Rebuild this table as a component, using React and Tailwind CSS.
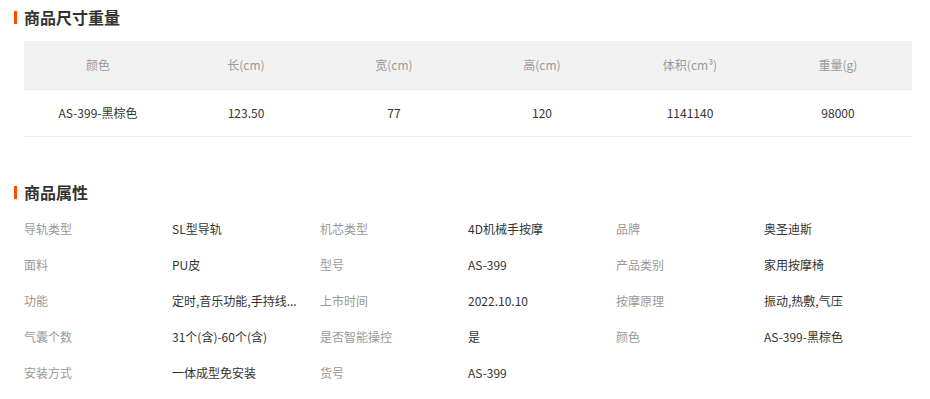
const sizeHeads = ["颜色", "长(cm)", "宽(cm)", "高(cm)", "体积(cm³)", "重量(g)"];
const sizeRow = ["AS-399-黑棕色", "123.50", "77", "120", "1141140", "98000"];

const attrs = [
  ["导轨类型", "SL型导轨"],
  ["机芯类型", "4D机械手按摩"],
  ["品牌", "奥圣迪斯"],
  ["面料", "PU皮"],
  ["型号", "AS-399"],
  ["产品类别", "家用按摩椅"],
  ["功能", "定时,音乐功能,手持线..."],
  ["上市时间", "2022.10.10"],
  ["按摩原理", "振动,热敷,气压"],
  ["气囊个数", "31个(含)-60个(含)"],
  ["是否智能操控", "是"],
  ["颜色", "AS-399-黑棕色"],
  ["安装方式", "一体成型免安装"],
  ["货号", "AS-399"],
];

function SectionTitle({ children }) {
  return (
    <div className="flex items-center h-5 pl-[14px]">
      <span className="w-[3px] h-[13px] bg-[#ff4a00] mr-[7px]" />
      <h3 className="text-[16px] font-bold text-[#333] leading-5">{children}</h3>
    </div>
  );
}

export default function App() {
  return (
    <div
      className="w-[930px] h-[399px] bg-white overflow-hidden pt-[7px]"
      style={{ fontFamily: '"Noto Sans CJK SC", "Noto Sans", sans-serif' }}
    >
      <SectionTitle>商品尺寸重量</SectionTitle>

      {/* size table */}
      <div className="ml-6 w-[888px] mt-[14px] text-[12px]">
        <div className="grid grid-cols-6 h-12 items-center bg-[#f2f2f2] text-[#999]">
          {sizeHeads.map((h) => (
            <div key={h} className="text-center">{h}</div>
          ))}
        </div>
        <div className="grid grid-cols-6 h-12 items-center border-y border-[#ebebeb] text-[#333]">
          {sizeRow.map((v, i) => (
            <div key={i} className="text-center">{v}</div>
          ))}
        </div>
      </div>

      <div className="mt-[45px]">
        <SectionTitle>商品属性</SectionTitle>
      </div>

      {/* attributes */}
      <div className="ml-6 w-[888px] mt-[9px] grid grid-cols-6 text-[12px]">
        {attrs.map(([k, v]) => [
          <div key={k + "k"} className="h-9 flex items-center text-[#999]">{k}</div>,
          <div key={k + "v"} className="h-9 flex items-center text-[#333] whitespace-nowrap">
            {v}
          </div>,
        ])}
      </div>
    </div>
  );
}
